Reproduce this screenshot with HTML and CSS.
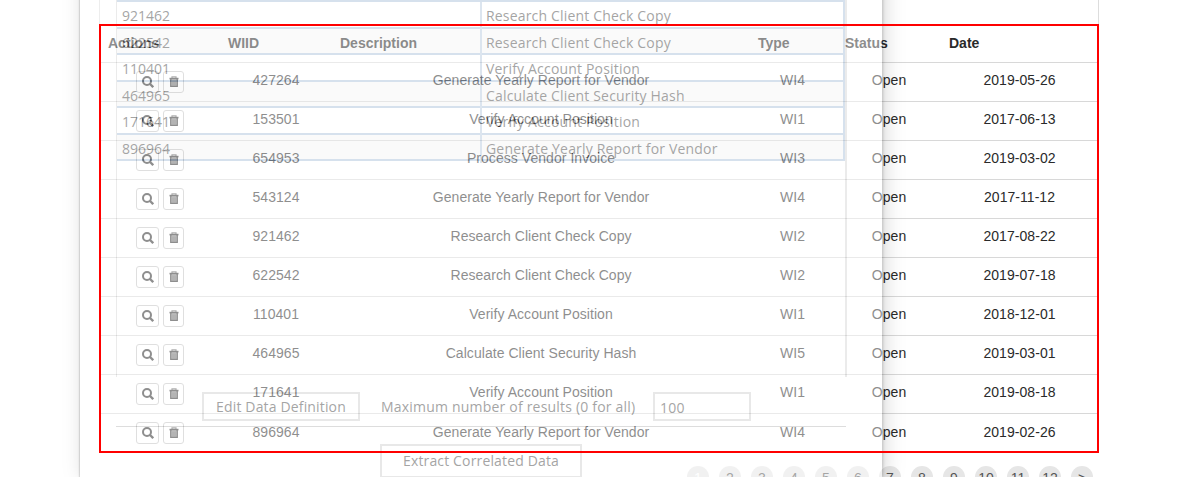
FILE: index.html
```html
<!DOCTYPE html>
<html lang="en">
<head>
<meta charset="utf-8">
<title>Work items</title>
<link rel="stylesheet" href="styles.css">
</head>
<body>
<svg class="defs" width="0" height="0">
  <symbol id="search" viewBox="0 0 12 12"><circle cx="5" cy="5" r="4" fill="none" stroke="currentColor" stroke-width="2"/><path d="M7.8 7.8 L11.2 11.2" stroke="currentColor" stroke-width="2.3"/></symbol>
  <symbol id="trash" viewBox="0 0 10 12"><path d="M3 2V.8h4V2" fill="none" stroke="currentColor" stroke-width="1.2" opacity=".7"/><path d="M.5 2.6h9" stroke="currentColor" stroke-width="1.6"/><path d="M1.8 3v7.4h6.4V3" fill="currentColor" fill-opacity=".4" stroke="currentColor" stroke-width="1.4"/><path d="M4 4.2v5.6M6 4.2v5.6" stroke="currentColor" stroke-width=".9"/></symbol>
</svg>
<main class="page">
  <div class="panel-top"></div>
  <section class="items">
    <div class="row head"><span>Actions</span><span>WIID</span><span>Description</span><span>Type</span><span>Status</span><span>Date</span></div>
    <div id="rows"></div>
  </section>
  <nav class="pager" id="pager"></nav>
</main>
<aside class="dialog">
  <div class="box">
    <div class="results" id="results"></div>
  </div>
  <div class="options">
    <button class="edit">Edit Data Definition</button>
    <label>Maximum number of results (0 for all)</label>
    <div class="limit">100</div>
  </div>
  <button class="extract">Extract Correlated Data</button>
</aside>
<div class="highlight"></div>
<script src="app.js"></script>
</body>
</html>
```
FILE: styles.css
```css
html { height: 477px; overflow: hidden; }
* { box-sizing: border-box; }
body { margin: 0; height: 477px; overflow: hidden; position: relative; background: #fff; color: #2a2a2a; font: 14px "Liberation Sans", Arial, sans-serif; }
.defs { display: block; position: absolute; }
.page { margin-left: 99px; width: 1000px; height: 477px; overflow: hidden; }
.panel-top { height: 24px; border: solid #ddd; border-width: 0 1px; }
.row { display: grid; grid-template-columns: 120px 114px 416px 87px 106px 155px; height: 39px; border-bottom: 1px solid #d8d8d8; text-align: center; line-height: 35px; letter-spacing: 0.05px; }
.row.head { text-align: left; font-weight: bold; line-height: 39px; letter-spacing: 0; }
.row.head span { padding-left: 9px; }
.row.head span:nth-child(3), .row.head span:nth-child(6) { padding-left: 7px; }
.row:last-child { border-bottom: 0; line-height: 36px; }
.actions { display: flex; gap: 4px; padding: 8px 0 0 37px; }
.btn { display: flex; align-items: center; justify-content: center; width: 23px; height: 22px; border: 1px solid #c4c4c4; border-radius: 3px; }
.btn + .btn { width: 21px; }
.btn svg { display: block; width: 12px; height: 12px; }
.btn + .btn svg { width: 10px; }
.pager { display: flex; gap: 10px; margin: 13px 0 0 588px; }
.pager span { flex: none; width: 22px; height: 22px; border-radius: 50%; background: #e6e6e6; color: #555; text-align: center; line-height: 24px; }
.pager .current { color: #fff; }
.dialog { position: absolute; left: 80px; top: -40px; width: 802px; height: 517px; padding: 40px 36px 0; background: #fff; opacity: .47; box-shadow: 1px 0 3px rgba(0,0,0,.42), 3px 0 18px rgba(0,0,0,.32), -1px 0 1px rgba(0,0,0,.22); color: #404040; font: 14px "Open Sans", "Noto Sans", sans-serif; }
.box { width: 731px; height: 377px; border: solid #d5d5d5; border-width: 0 2px 0 1px; }
.results { border-right: 2px solid #a9c0da; }
.result { display: grid; grid-template-columns: 363px 1fr; height: 26.5px; border-bottom: 2px solid #a9c0da; line-height: 28px; }
.result:first-child { height: 2px; }
.result:nth-child(odd) { background: #f6f6f6; }
.result span { padding-left: 5px; white-space: nowrap; }
.result span + span { padding-left: 4px; border-left: 2px solid #b5c8df; letter-spacing: .18px; }
.options { display: flex; align-items: center; width: 730px; height: 50px; padding: 9px 0 0 86px; border-bottom: 1px solid #b8b8b8; letter-spacing: .2px; line-height: 22px; }
button { padding: 0; background: transparent; border: 2px solid #cfcfcf; color: inherit; font: inherit; letter-spacing: .15px; }
.edit { width: 158px; height: 29px; padding-top: 2px; }
.options label { width: 256px; margin: 0 16px 0 21px; padding-top: 2px; white-space: nowrap; }
.limit { width: 98px; height: 29px; padding-left: 5px; border: 2px solid #cfcfcf; line-height: 27px; }
.extract { display: block; width: 202px; height: 34px; margin: 17px 0 0 264px; padding-bottom: 1px; }
.highlight { position: absolute; left: 99px; top: 24px; width: 1000px; height: 429px; border: 2px solid #f00; }
```
FILE: app.js
```js
const G = 'Generate Yearly Report for Vendor', V = 'Verify Account Position', R = 'Research Client Check Copy', C = 'Calculate Client Security Hash';
const items = [
  [427264, G, 'WI4', '2019-05-26'], [153501, V, 'WI1', '2017-06-13'],
  [654953, 'Process Vendor Invoice', 'WI3', '2019-03-02'], [543124, G, 'WI4', '2017-11-12'],
  [921462, R, 'WI2', '2017-08-22'], [622542, R, 'WI2', '2019-07-18'],
  [110401, V, 'WI1', '2018-12-01'], [464965, C, 'WI5', '2019-03-01'],
  [171641, V, 'WI1', '2019-08-18'], [896964, G, 'WI4', '2019-02-26']
];
const icon = n => `<span class="btn"><svg><use href="#${n}"/></svg></span>`;
document.getElementById('rows').innerHTML = items.map(([id, d, t, date]) =>
  `<div class="row"><div class="actions">${icon('search')}${icon('trash')}</div><span>${id}</span><span>${d}</span><span>${t}</span><span>Open</span><span>${date}</span></div>`).join('');
document.getElementById('results').innerHTML = '<div class="result"></div>' + items.slice(4).map(([id, d]) =>
  `<div class="result"><span>${id}</span><span>${d}</span></div>`).join('');
document.getElementById('pager').innerHTML = [1,2,3,4,5,6,7,8,9,10,11,12,'&gt;'].map((n, i) =>
  `<span${i ? '' : ' class="current"'}>${n}</span>`).join('');
```
